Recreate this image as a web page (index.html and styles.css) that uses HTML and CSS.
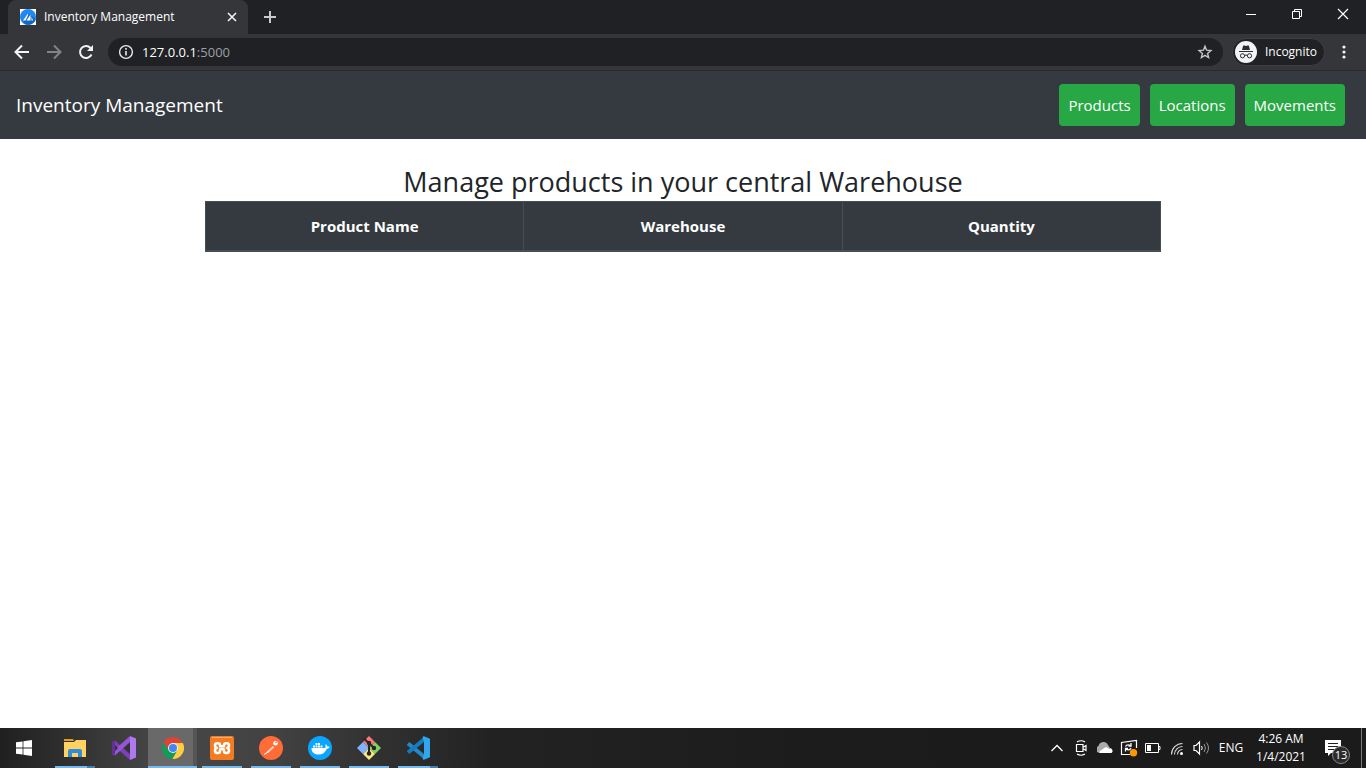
FILE: index.html
```html
<!DOCTYPE html>
<html lang="en">
<head>
<meta charset="utf-8">
<title>Inventory Management</title>
<link rel="stylesheet" href="styles.css">
</head>
<body>
<div class="screen">
  <header class="browser">
    <div class="tab-strip">
      <div class="tab">
        <svg class="favicon" width="16" height="16" viewBox="0 0 16 16"><path d="M0 0h16v16H0z" fill="#fff"/><circle cx="8" cy="8" r="8" fill="#1e88f5"/><path fill="#1269c0" d="M9 5l7 5a8 8 0 0 1-11 5l-2-3z"/><path fill="#fff" d="M3 11.500L8 4.500v2L5.500 11.500zM6.500 11.500l4-6v6zM11.500 11.500V7.500l1.500 4z"/></svg>
        <span class="tab-title">Inventory Management</span>
        <button class="icon-button tab-close" aria-label="Close tab"><svg width="10" height="10" viewBox="0 0 10 10"><path d="M1 1l8 8M9 1L1 9" stroke="#f1f3f4" stroke-width="1.600"/></svg></button>
      </div>
      <button class="icon-button new-tab" aria-label="New tab"><svg width="12" height="12" viewBox="0 0 12 12"><path d="M6 0v12M0 6h12" stroke="#c9cacc" stroke-width="2"/></svg></button>
      <div class="window-controls">
        <button class="icon-button" aria-label="Minimize"><svg width="12" height="12" viewBox="0 0 12 12"><path d="M1 6.500h10" stroke="#fff"/></svg></button>
        <button class="icon-button" aria-label="Restore"><svg width="12" height="12" viewBox="0 0 12 12"><path d="M1.500 3.500h7v7h-7zM3.500 3V1.500h7v7H9" fill="none" stroke="#fff"/></svg></button>
        <button class="icon-button" aria-label="Close"><svg width="12" height="12" viewBox="0 0 12 12"><path d="M1 1l10 10M11 1L1 11" stroke="#fff" stroke-width="1.200"/></svg></button>
      </div>
    </div>
    <div class="toolbar">
      <button class="icon-button tool" aria-label="Back"><svg width="16" height="16" viewBox="0 0 16 16"><path d="M15 8H2M8 1.500L1.500 8 8 14.500" fill="none" stroke="#f1f3f4" stroke-width="2"/></svg></button>
      <button class="icon-button tool" aria-label="Forward"><svg width="16" height="16" viewBox="0 0 16 16"><path d="M1 8h13M8 1.500L14.500 8 8 14.500" fill="none" stroke="#828386" stroke-width="2"/></svg></button>
      <button class="icon-button tool" aria-label="Reload"><svg width="16" height="16" viewBox="0 0 16 16"><path d="M13.500 10.500A6 6 0 1 1 12.500 4" fill="none" stroke="#f1f3f4" stroke-width="2"/><path d="M15 1v6H9z" fill="#f1f3f4"/></svg></button>
      <div class="address">
        <svg width="16" height="16" viewBox="0 0 16 16"><circle cx="8" cy="8" r="6.400" fill="none" stroke="#e8eaed" stroke-width="1.400"/><path d="M8 7v4.500M8 4v1.700" stroke="#e8eaed" stroke-width="1.600"/></svg>
        <a class="url" href="#">127.0.0.1<span class="port">:5000</span></a>
        <button class="icon-button star" aria-label="Bookmark"><svg width="16" height="16" viewBox="0 0 16 16"><path d="M8 2.200l1.600 4 4.300.4-3.300 2.800 1 4.200L8 11.400l-3.600 2.200 1-4.200-3.300-2.800 4.300-.4z" fill="none" stroke="#c4c5c7" stroke-width="1.400"/></svg></button>
      </div>
      <div class="incognito">
        <svg width="22" height="22" viewBox="0 0 22 22"><circle cx="11" cy="11" r="11" fill="#f1f3f4"/><path d="M7 9l1.200-4.500h1.300l1.500.5 1.500-.5h1.300L15 9z" fill="#2b2c30"/><path d="M4 10.500h14M9.500 14.500q1.500-1 3 0" stroke="#2b2c30" stroke-width="1.100" fill="none"/><circle cx="7.500" cy="14.800" r="2.100" fill="none" stroke="#2b2c30"/><circle cx="14.500" cy="14.800" r="2.100" fill="none" stroke="#2b2c30"/></svg>
        <span>Incognito</span>
      </div>
      <button class="icon-button menu" aria-label="Menu"><svg width="16" height="16" viewBox="0 0 16 16"><g fill="#f1f3f4"><circle cx="8" cy="3" r="1.600"/><circle cx="8" cy="8" r="1.600"/><circle cx="8" cy="13" r="1.600"/></g></svg></button>
    </div>
  </header>

  <nav class="navbar">
    <a class="brand" href="#">Inventory Management</a>
    <div class="nav-links">
      <a class="nav-button" href="#">Products</a>
      <a class="nav-button" href="#">Locations</a>
      <a class="nav-button" href="#">Movements</a>
    </div>
  </nav>

  <main class="content">
    <h1 class="heading">Manage products in your central Warehouse</h1>
    <table class="products">
      <thead><tr><th scope="col">Product Name</th><th scope="col">Warehouse</th><th scope="col">Quantity</th></tr></thead>
    </table>
  </main>

  <footer class="taskbar">
    <button class="task start" aria-label="Start"><svg width="16" height="16" viewBox="0 0 16 16"><path fill="#fff" d="M0 2.300l6.600-.9v6.200H0zM7.400 1.300L16 0v7.600H7.400zM0 8.400h6.600v6.200L0 13.700zM7.400 8.400H16V16l-8.600-1.200z"/></svg></button>
    <button class="task open multi" aria-label="File Explorer"><svg width="24" height="24" viewBox="0 0 24 24"><path fill="#e3a008" d="M1 3h9l1 2H1z"/><path fill="#ffd261" d="M1 6h10l2-2h10v17H1z"/><path fill="#2f8edb" d="M5 21v-6q0-2 2-2h10q2 0 2 2v6h-4v-4H9v4z"/></svg></button>
    <button class="task" aria-label="Visual Studio"><svg width="24" height="24" viewBox="0 0 24 24"><path fill="#7d3fbd" d="M0 6l3-1.500 15 14V24L0 8z"/><path fill="#9654d6" d="M0 18l3 1.500L18 6V0L0 16z"/><path fill="#633099" d="M0 6l3-1v14l-3-1z"/><path fill="#b078ee" d="M18 0l6 2.500v19L18 24z"/><path fill="#333" d="M3 9l3 3-3 3zM18 7v10l-6-5z"/></svg></button>
    <button class="task open active" aria-label="Chrome"><svg width="22" height="22" viewBox="0 0 22 22"><path fill="#ffcd40" d="M11 11V6h9.800A11 11 0 0 1 10.200 22z"/><path fill="#0f9d58" d="M1.500 5.500L11 11l4.300 2.500L10.400 22A11 11 0 0 1 1.500 5.500z"/><path fill="#db4437" d="M1.500 5.500A11 11 0 0 1 20.800 6H11L6.700 13.500z"/><circle cx="11" cy="11" r="5" fill="#f1f1f1"/><circle cx="11" cy="11" r="4" fill="#4285f4"/></svg></button>
    <button class="task open" aria-label="XAMPP"><svg width="24" height="24" viewBox="0 0 24 24"><rect width="24" height="24" rx="2" fill="#f47b20"/><path d="M2 1.500h20" stroke="#f9b27c"/><path d="M8 7.200H7q-2 0-2 2.300T7 12q-2 .3-2 2.600t2 2.400h1q2 0 2-2v-1q0-1 1-1h2q1 0 1 1v1q0 2 2 2h1q2 0 2-2.400T17 12q2-.2 2-2.500t-2-2.300h-1q-2 0-2 2v1h-4v-1q0-2-2-2z" fill="none" stroke="#fff" stroke-width="2.600" stroke-linejoin="round"/></svg></button>
    <button class="task open" aria-label="Postman"><svg width="24" height="24" viewBox="0 0 24 24"><circle cx="12" cy="12" r="12" fill="#ff6c37"/><path d="M6.500 17.500l2-2.500 5.500-5 1.300 1.300-5.300 4.700z" fill="#ffd9c9"/><path d="M5 18.500l5-3" stroke="#fff"/><circle cx="16.500" cy="7.300" r="2.300" fill="#fff"/><path d="M16 7l2-1" stroke="#ff6c37"/></svg></button>
    <button class="task open" aria-label="Docker"><svg width="24" height="24" viewBox="0 0 24 24"><circle cx="12" cy="12" r="12" fill="#0aa5ff"/><path fill="#fff" d="M3.500 12h13c1 0 1.500-1.300.8-3l.8-.7 1.400 2.200 2.200.2c-.6 1.600-1.700 2-3 2-1.600 4-4.200 5.800-8.300 5.800-4.400 0-7-2.500-6.900-6.500zM5 9.500h2v2H5zM7.500 9.500h2v2h-2zM10 9.500h2v2h-2zM12.500 9.500h2v2h-2zM7.500 7h2v2h-2zM10 7h2v2h-2z"/></svg></button>
    <button class="task open" aria-label="Git Bash"><svg width="24" height="24" viewBox="0 0 24 24"><path fill="#fa7978" d="M12 0l6 6-6 6-6-6z"/><path fill="#80b3ff" d="M6 6l6 6-6 6-6-6z"/><path fill="#85d261" d="M18 6l6 6-6 6-6-6z"/><path fill="#ffe680" d="M12 12l6 6-6 6-6-6z"/><path d="M7 2.500l5 5M12 6v12M12 7l5 5" stroke="#262626" stroke-width="2"/><g fill="#262626"><circle cx="12" cy="7" r="2.200"/><circle cx="17" cy="12" r="2.200"/><circle cx="12" cy="17.500" r="2.200"/></g></svg></button>
    <button class="task open multi" aria-label="Visual Studio Code"><svg width="24" height="24" viewBox="0 0 24 24"><path d="M2 7.500L18 20.500" stroke="#2489ca" stroke-width="4"/><path d="M2 16.500L18 3.500" stroke="#147dc0" stroke-width="4"/><path fill="#32a6ec" d="M17.500 0L24 2.800v18.400L17.500 24l-1-2 1.500-3V5l-1.500-3z"/></svg></button>

    <div class="tray">
      <button class="tray-icon" aria-label="Show hidden icons"><svg width="16" height="16" viewBox="0 0 16 16"><path d="M2.500 11L8 5.500l5.500 5.500" fill="none" stroke="#fff" stroke-width="1.300"/></svg></button>
      <button class="tray-icon" aria-label="Meet now"><svg width="16" height="16" viewBox="0 0 16 16"><path d="M3.500 4.500h6.500v7H3.500zM10.500 7l2.500-1.500v5L10.500 9M4 2q4-2.500 8 0M4 14q4 2.500 8 0" fill="none" stroke="#fff" stroke-width="1.200"/></svg></button>
      <button class="tray-icon" aria-label="OneDrive"><svg width="16" height="16" viewBox="0 0 16 16"><path fill="#aaa" d="M1 12.500A3.600 3.600 0 0 1 1.500 6a5 5 0 0 1 9.500-1l2 3-8 4z"/><path fill="#fff" d="M2 13q0-2 3-3.500L9 7l3 1.500A2.600 2.600 0 0 1 14.500 13z"/></svg></button>
      <button class="tray-icon" aria-label="Update"><svg width="18" height="18" viewBox="0 0 18 18"><path d="M10 15.500H1.500v-12L16.500 1.500V9" fill="none" stroke="#fff" stroke-width="1.200"/><path d="M5.500 7.500q1.500-2.500 5-1M11 4v3H8.500M11 9q-1.500 3-5 1M5.500 12.500v-3H8" fill="none" stroke="#fff" stroke-width="1.300"/><circle cx="13.500" cy="13.700" r="3.700" fill="#ff9800"/></svg></button>
      <button class="tray-icon" aria-label="Battery"><svg width="16" height="16" viewBox="0 0 16 16"><path d="M.5 3.500h13v9H.5zM13.500 6.500h1.500v3h-1.500" fill="none" stroke="#fff"/><path d="M2 5h4v6H2z" fill="#fff"/></svg></button>
      <button class="tray-icon" aria-label="Wi-Fi"><svg width="16" height="16" viewBox="0 0 16 16"><g fill="none" stroke="#ddd" stroke-width="1.100"><path d="M2.500 14.500A11 11 0 0 1 13.500 3.500M5.500 14.500A8 8 0 0 1 13.500 6.500M8.500 14.500A5 5 0 0 1 13.500 9.500"/></g><circle cx="12.500" cy="13.500" r="1.500" fill="#fff"/></svg></button>
      <button class="tray-icon" aria-label="Volume"><svg width="16" height="16" viewBox="0 0 16 16"><path d="M1 5.500h2L6.500 2v12L3 10.500H1z" fill="none" stroke="#fff" stroke-width="1.200"/><path d="M8.500 6q1.500 2 0 4" fill="none" stroke="#fff"/><path d="M11 4q3 4 0 8M13.500 2.500q4 5.500 0 11" fill="none" stroke="#999"/></svg></button>
      <button class="language">ENG</button>
      <div class="clock"><span>4:26 AM</span><span>1/4/2021</span></div>
      <button class="notifications" aria-label="Notifications"><svg width="16" height="16" viewBox="0 0 16 16"><path fill="#fff" d="M0 0h16v13H6l-3 3v-3H0z"/><path d="M3 3.500h10M3 6.500h10M3 9.500h7" stroke="#222"/></svg><span class="count">13</span></button>
    </div>
  </footer>
</div>
</body>
</html>
```
FILE: styles.css
```css
* { box-sizing: border-box; }
body { margin: 0; background: #fff; font-family: "Segoe UI", "Open Sans", "Noto Sans", sans-serif; font-size: 15px; line-height: 24px; color: #212529; }
button { margin: 0; padding: 0; border: 0; background: none; color: inherit; font: inherit; }
a { color: inherit; text-decoration: none; }
svg { display: block; flex: none; }
.screen { min-height: 100vh; display: flex; flex-direction: column; }
.icon-button { display: flex; align-items: center; justify-content: center; }

.browser { background: #35363a; border-bottom: 1px solid #292a2d; color: #fff; font-size: 12px; line-height: 16px; }
.tab-strip { display: flex; height: 34px; background: #202124; padding-left: 8px; }
.tab { display: flex; align-items: center; width: 240px; padding: 0 10px 0 12px; background: #35363a; border-radius: 8px 8px 0 0; }
.tab-title { flex: 1; margin-left: 8px; font-size: 12px; white-space: nowrap; }
.tab-close { width: 12px; height: 16px; }
.new-tab { width: 44px; }
.window-controls { display: flex; margin-left: auto; height: 28px; }
.window-controls .icon-button { width: 46px; }
.toolbar { display: flex; align-items: center; height: 36px; padding: 0 14px 0 6px; }
.tool { width: 32px; height: 32px; }
.address { flex: 1; display: flex; align-items: center; gap: 8px; height: 28px; margin-left: 6px; padding: 0 10px; border-radius: 14px; background: #202124; font-size: 13px; }
.url { flex: 1; }
.port { color: #9aa0a6; }
.incognito { display: flex; align-items: center; gap: 8px; height: 28px; margin-left: 9px; padding: 0 7px 0 2px; border: 1px solid #3d3e42; border-radius: 14px; background: #202124; }
.menu { width: 16px; margin-left: 11px; }

.navbar { display: flex; align-items: center; justify-content: space-between; height: 68px; padding: 0 21px 0 16px; background: #343a40; color: #fff; }
.brand { font-size: 19px; line-height: 30px; }
.nav-links { display: flex; gap: 10px; }
.nav-button { padding: 9px; border-radius: 4px; background: #28a745; }

.content { flex: 1; width: 70%; margin: 0 auto; padding-top: 26px; }
.heading { margin: 0 0 2px; font-size: 27px; line-height: 34px; font-weight: 500; text-align: center; }
.products { width: 100%; table-layout: fixed; border-collapse: collapse; background: #343a40; color: #fff; }
.products th { padding: 12px; border: 1px solid #454d55; border-bottom-width: 2px; font-weight: 700; text-align: center; }

.taskbar { display: flex; height: 40px; background: linear-gradient(90deg, #202020 0%, #303030 5%, #484848 12%, #424242 20%, #303030 28%, #222 36%, #1c1c1c 60%, #1b1b1b 100%); color: #fff; font-size: 12px; line-height: 18px; }
.task { position: relative; display: flex; align-items: center; justify-content: center; width: 49px; }
.start { width: 48px; margin-right: 2px; }
.open::after { content: ""; position: absolute; bottom: 0; left: 5px; right: 4px; height: 2px; background: #76b9ed; }
.multi::after { background: linear-gradient(90deg, #76b9ed 80%, #4a7ea8 80%); }
.active { background: linear-gradient(90deg, #696969 92%, #555 92%); }
.active::after { left: 0; right: 0; }
.tray { display: flex; align-items: center; margin-left: auto; margin-right: 4px; border-right: 1px solid #777; }
.tray-icon { display: flex; align-items: center; justify-content: center; width: 24px; height: 40px; }
.language { width: 36px; }
.clock { display: flex; flex-direction: column; align-items: center; width: 64px; }
.notifications { position: relative; display: flex; align-items: center; justify-content: center; width: 48px; height: 40px; padding-right: 8px; }
.count { position: absolute; right: 11px; bottom: 4px; width: 18px; height: 18px; border: 1px solid #888; border-radius: 9px; background: #2b2b2b; font-size: 11px; line-height: 16px; text-align: center; }
```
